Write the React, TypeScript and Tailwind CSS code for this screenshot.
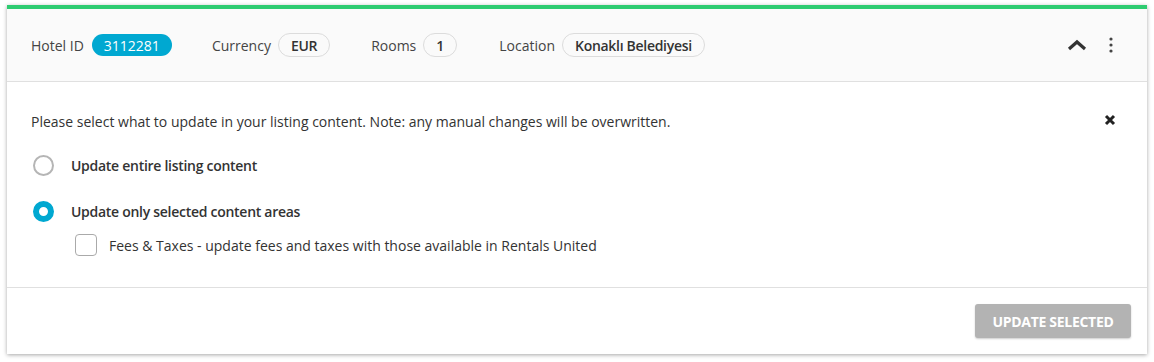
import React from "react";

export default function App() {
  return (
    <div className="w-[1154px] h-[362px] bg-white pt-[5px] px-[7px] pb-[8px]" style={{ fontFamily: '"Open Sans", sans-serif' }}>
      <div className="h-full flex flex-col bg-white border-t-4 border-[#2ecc71] shadow-[0_1px_4px_rgba(0,0,0,0.35)] text-[#333]">
        {/* header */}
        <div className="h-[73px] shrink-0 bg-[#fafafa] border-b border-[#e0e0e0] flex items-center pl-[24px] pr-[34px] text-[14px]">
          <span className="text-[#444]">Hotel ID</span>
          <span className="ml-[8px] h-[22px] px-[12px] rounded-full bg-[#00a8d1] text-white flex items-center">3112281</span>
          <span className="ml-[40px] text-[#444]">Currency</span>
          <span className="ml-[7px] h-[24px] px-[12px] rounded-full border border-[#dcdcdc] flex items-center font-semibold tracking-[-0.3px] text-[#333]">EUR</span>
          <span className="ml-[41px] text-[#444]">Rooms</span>
          <span className="ml-[7px] h-[24px] px-[12px] rounded-full border border-[#dcdcdc] flex items-center font-semibold text-[#333]">1</span>
          <span className="ml-[42px] text-[#444]">Location</span>
          <span className="ml-[7px] h-[24px] px-[12px] rounded-full border border-[#dcdcdc] flex items-center font-semibold tracking-[-0.3px] text-[#333]">Konaklı Belediyesi</span>
          <div className="ml-auto flex items-center gap-[22px]">
            <svg width="20" height="12" viewBox="0 0 20 12">
              <path d="M2 10 L10 3 L18 10" stroke="#333" strokeWidth="3.2" fill="none" />
            </svg>
            <svg width="4" height="16" viewBox="0 0 4 16">
              <circle cx="2" cy="2" r="1.6" fill="#444" />
              <circle cx="2" cy="8" r="1.6" fill="#444" />
              <circle cx="2" cy="14" r="1.6" fill="#444" />
            </svg>
          </div>
        </div>
        {/* body */}
        <div className="flex-1 border-b border-[#e0e0e0] pl-[24px] pr-[30px] pt-[29px]">
          <div className="flex items-center justify-between h-[20px]">
            <span className="text-[14px] text-[#333]">Please select what to update in your listing content. Note: any manual changes will be overwritten.</span>
            <svg width="12" height="12" viewBox="0 0 12 12" className="mr-[1px] -mt-[3px]">
              <path d="M2 2 L10 10 M10 2 L2 10" stroke="#222" strokeWidth="3" />
            </svg>
          </div>
          <div className="mt-[23px] flex items-center h-[22px]">
            <span className="ml-[2px] w-[21px] h-[21px] rounded-full border-2 border-[#b5b5b5] bg-white"></span>
            <span className="ml-[17px] text-[14px] font-semibold tracking-[-0.28px] text-[#333]">Update entire listing content</span>
          </div>
          <div className="mt-[24px] flex items-center h-[22px]">
            <span className="ml-[2px] w-[21px] h-[21px] rounded-full border-[6px] border-[#00a8d1] bg-white"></span>
            <span className="ml-[17px] text-[14px] font-semibold tracking-[-0.28px] text-[#333]">Update only selected content areas</span>
          </div>
          <div className="mt-[11px] flex items-center h-[24px] pl-[44px]">
            <span className="w-[22px] h-[22px] rounded-[4px] border border-[#aaa] bg-white"></span>
            <span className="ml-[12px] text-[14px] text-[#333]">Fees &amp; Taxes - update fees and taxes with those available in Rentals United</span>
          </div>
        </div>
        {/* footer */}
        <div className="h-[66px] shrink-0 flex items-center justify-end pr-[16px]">
          <button className="w-[156px] h-[34px] rounded-[3px] bg-[#b3b3b3] text-white font-bold text-[14px] uppercase shadow-[0_1px_2px_rgba(0,0,0,0.2)] tracking-[-0.3px]">Update selected</button>
        </div>
      </div>
    </div>
  );
}
